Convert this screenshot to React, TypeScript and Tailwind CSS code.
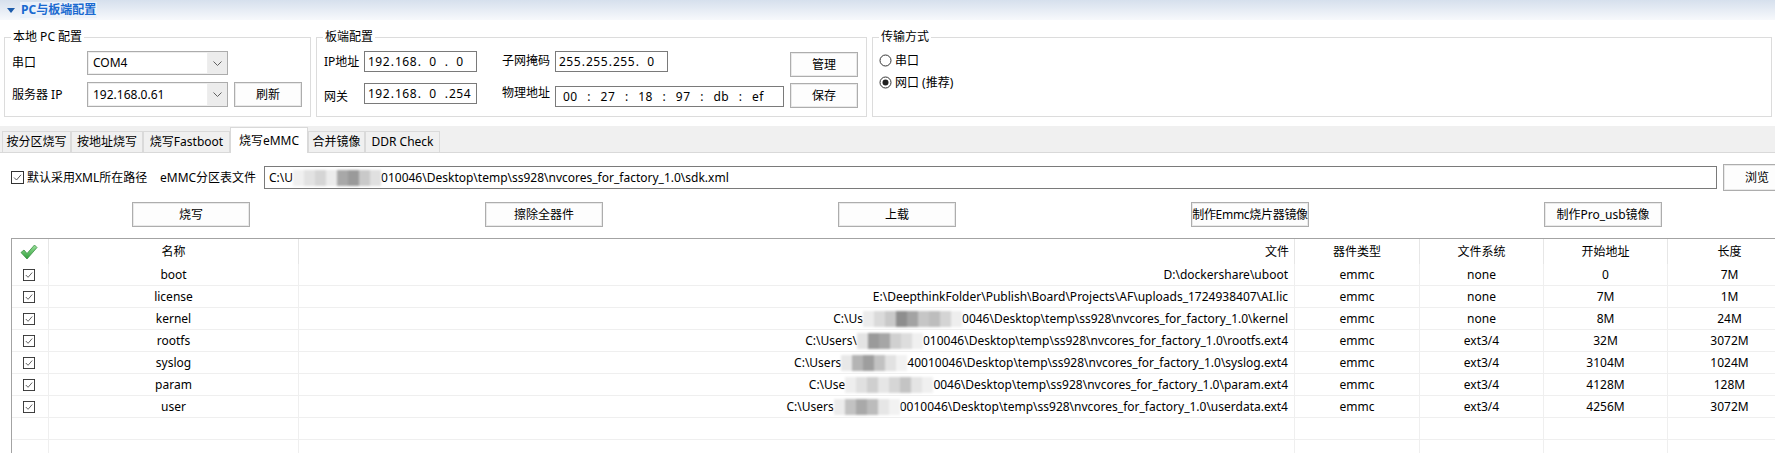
import React from "react";

const FONT = "font-['Noto_Sans','Noto_Sans_CJK_SC',sans-serif]";

function GroupBox({ title, className, children }: { title: string; className: string; children?: React.ReactNode }) {
  return (
    <div className={`relative h-[80px] border border-[#dcdcdc] ${className}`}>
      <span className="absolute left-[6px] top-[-9px] bg-white px-[2px] leading-[16px]">{title}</span>
      {children}
    </div>
  );
}

function Chevron() {
  return (
    <svg width="9" height="5" viewBox="0 0 9 5">
      <path d="M0.5 0.5 L4.5 4.5 L8.5 0.5" fill="none" stroke="#606060" strokeWidth="1" />
    </svg>
  );
}

function Combo({ value, tall }: { value: string; tall?: boolean }) {
  return (
    <div className={`flex w-[141px] shrink-0 border border-[#acacac] bg-white ${tall ? "h-[25px]" : "h-[24px]"}`}>
      <div className="flex flex-1 items-center border border-[#eeeeee] pl-[4px]">{value}</div>
      <div className="flex w-[19px] items-center justify-center bg-[#ececec]">
        <Chevron />
      </div>
    </div>
  );
}

function Btn({ children, className }: { children: React.ReactNode; className: string }) {
  return (
    <div
      className={`flex shrink-0 items-center justify-center whitespace-nowrap border border-[#adadad] bg-[#fdfdfd] shadow-[inset_0_0_0_1px_#e9e9e9] ${className}`}
    >
      {children}
    </div>
  );
}

function IpBox({ parts }: { parts: string[] }) {
  return (
    <div className="flex h-[21px] w-[113px] shrink-0 items-center border border-[#7a7a7a] bg-white pl-[3px] tracking-[0.5px]">
      {parts.map((p, i) => (
        <React.Fragment key={i}>
          {i > 0 && <span className="w-[5px] text-center">.</span>}
          <span className="w-[22px] text-center">{p}</span>
        </React.Fragment>
      ))}
    </div>
  );
}

function Radio({ selected }: { selected?: boolean }) {
  return (
    <svg width="13" height="13" viewBox="0 0 13 13">
      <circle cx="6.5" cy="6.5" r="5.5" fill="white" stroke="#333" strokeWidth="1" />
      {selected && <circle cx="6.5" cy="6.5" r="3" fill="#222" />}
    </svg>
  );
}

function CheckBox({ size }: { size: number }) {
  const s = size;
  return (
    <svg width={s} height={s} viewBox="0 0 13 13" className="shrink-0">
      <rect x="0.5" y="0.5" width="12" height="12" fill="white" stroke="#333" strokeWidth="1" />
      <path d="M3 6.5 L5.5 9 L10 3.8" fill="none" stroke="#555" strokeWidth="1" />
    </svg>
  );
}

function GreenCheck() {
  return (
    <svg width="18" height="16" viewBox="0 0 18 16">
      <defs>
        <linearGradient id="gc" x1="0" y1="0" x2="0" y2="1">
          <stop offset="0" stopColor="#9be29b" />
          <stop offset="1" stopColor="#2f9e3a" />
        </linearGradient>
      </defs>
      <path d="M1 8.5 L4 6 L7 9.5 L14.5 1 L17 3.5 L7 15 Z" fill="url(#gc)" stroke="#3b8f44" strokeWidth="0.8" strokeLinejoin="round" />
    </svg>
  );
}

function Mosaic({ shades }: { shades: string[] }) {
  return (
    <span className="inline-flex h-[16px] align-middle blur-[1px]">
      {shades.map((c, i) => (
        <span key={i} className="h-[16px] w-[11px]" style={{ backgroundColor: c }} />
      ))}
    </span>
  );
}

type Path = { pre: string; shades: string[]; post: string } | string;

function PathText({ p }: { p: Path }) {
  if (typeof p === "string") return <span>{p}</span>;
  return (
    <span className="inline-flex items-center whitespace-pre">
      <span>{p.pre}</span>
      <Mosaic shades={p.shades} />
      <span>{p.post}</span>
    </span>
  );
}

const rows: { name: string; file: Path; fs: string; start: string; len: string }[] = [
  { name: "boot", file: "D:\\dockershare\\uboot", fs: "none", start: "0", len: "7M" },
  {
    name: "license",
    file: "E:\\DeepthinkFolder\\Publish\\Board\\Projects\\AF\\uploads_1724938407\\AI.lic",
    fs: "none",
    start: "7M",
    len: "1M",
  },
  {
    name: "kernel",
    file: {
      pre: "C:\\Us",
      shades: ["#ececec", "#dadada", "#c9c9c9", "#8e8e8e", "#a3a3a3", "#c6c6c6", "#bdbdbd", "#d4d4d4", "#eeeeee"],
      post: "0046\\Desktop\\temp\\ss928\\nvcores_for_factory_1.0\\kernel",
    },
    fs: "none",
    start: "8M",
    len: "24M",
  },
  {
    name: "rootfs",
    file: {
      pre: "C:\\Users\\",
      shades: ["#e4e4e4", "#9a9a9a", "#a6a6a6", "#d0d0d0", "#dddddd", "#f0f0f0"],
      post: "010046\\Desktop\\temp\\ss928\\nvcores_for_factory_1.0\\rootfs.ext4",
    },
    fs: "ext3/4",
    start: "32M",
    len: "3072M",
  },
  {
    name: "syslog",
    file: {
      pre: "C:\\Users",
      shades: ["#e8e8e8", "#b4b4b4", "#9e9e9e", "#c2c2c2", "#e2e2e2", "#f2f2f2"],
      post: "40010046\\Desktop\\temp\\ss928\\nvcores_for_factory_1.0\\syslog.ext4",
    },
    fs: "ext3/4",
    start: "3104M",
    len: "1024M",
  },
  {
    name: "param",
    file: {
      pre: "C:\\Use",
      shades: ["#eeeeee", "#e0e0e0", "#cfcfcf", "#e6e6e6", "#d6d6d6", "#c4c4c4", "#e4e4e4", "#f0f0f0"],
      post: "0046\\Desktop\\temp\\ss928\\nvcores_for_factory_1.0\\param.ext4",
    },
    fs: "ext3/4",
    start: "4128M",
    len: "128M",
  },
  {
    name: "user",
    file: {
      pre: "C:\\Users",
      shades: ["#ececec", "#c2c2c2", "#a9a9a9", "#bcbcbc", "#e6e6e6", "#f2f2f2"],
      post: "0010046\\Desktop\\temp\\ss928\\nvcores_for_factory_1.0\\userdata.ext4",
    },
    fs: "ext3/4",
    start: "4256M",
    len: "3072M",
  },
];

const tabs = ["按分区烧写", "按地址烧写", "烧写Fastboot", "烧写eMMC", "合并镜像", "DDR Check"];
const tabW = ["w-[69px]", "w-[72px]", "w-[87px]", "w-[78px]", "w-[57px]", "w-[75px]"];

export default function App() {
  const hdr = "flex h-[25px] items-center border-r border-[#e6e6e6]";
  const cell = "flex h-[22px] items-center border-r border-b border-[#efefef]";
  return (
    <div className={`h-[453px] w-[1775px] overflow-hidden bg-white text-[12px] leading-[16px] text-black ${FONT}`}>
      {/* Header bar */}
      <div className="flex h-[20px] items-center bg-linear-to-b from-[#d6e0ed] to-[#f7f9fc]">
        <svg className="ml-[7px]" width="8" height="5" viewBox="0 0 8 5">
          <polygon points="0,0 8,0 4,5" fill="#1d5cab" />
        </svg>
        <span className="ml-[5px] bg-[#eaf1fa] px-[1px] font-bold text-[#1a6ad0]">PC与板端配置</span>
      </div>

      {/* Config groups */}
      <div className="flex h-[106px] gap-[5px] pl-[4px] pt-[17px]">
        <GroupBox title="本地 PC 配置" className="w-[307px]">
          <div className="pl-[7px] pt-[13px]">
            <div className="flex h-[24px] items-center">
              <span className="w-[75px] shrink-0">串口</span>
              <Combo value="COM4" />
            </div>
            <div className="mt-[7px] flex h-[25px] items-center">
              <span className="w-[75px] shrink-0">服务器 IP</span>
              <Combo value="192.168.0.61" tall />
              <Btn className="ml-[6px] h-[25px] w-[68px]">刷新</Btn>
            </div>
          </div>
        </GroupBox>

        <GroupBox title="板端配置" className="w-[551px]">
          <div className="flex pl-[7px]">
            <div className="w-[153px] shrink-0 pt-[13px]">
              <div className="flex h-[21px] items-center">
                <span className="w-[40px] shrink-0">IP地址</span>
                <IpBox parts={["192", "168", "0", "0"]} />
              </div>
              <div className="mt-[11px] flex h-[21px] items-center">
                <span className="w-[40px] shrink-0 pt-[6px]">网关</span>
                <IpBox parts={["192", "168", "0", "254"]} />
              </div>
            </div>
            <div className="ml-[25px] w-[282px] shrink-0 pt-[13px]">
              <div className="flex h-[21px] items-center">
                <span className="w-[53px] shrink-0 pb-[2px]">子网掩码</span>
                <IpBox parts={["255", "255", "255", "0"]} />
              </div>
              <div className="mt-[14px] flex h-[21px] items-center">
                <span className="w-[53px] shrink-0 pb-[8px]">物理地址</span>
                <div className="flex h-[21px] w-[229px] shrink-0 items-center justify-between border border-[#7a7a7a] bg-white pl-[7px] pr-[19px] tracking-[0.5px]">
                  <span>00</span>
                  <span>:</span>
                  <span>27</span>
                  <span>:</span>
                  <span>18</span>
                  <span>:</span>
                  <span>97</span>
                  <span>:</span>
                  <span>db</span>
                  <span>:</span>
                  <span>ef</span>
                </div>
              </div>
            </div>
            <div className="ml-[6px] pt-[14px]">
              <Btn className="h-[25px] w-[68px]">管理</Btn>
              <Btn className="mt-[6px] h-[25px] w-[68px]">保存</Btn>
            </div>
          </div>
        </GroupBox>

        <GroupBox title="传输方式" className="w-[900px]">
          <div className="pl-[6px] pt-[16px]">
            <div className="flex h-[13px] items-center gap-[3px]">
              <Radio />
              <span>串口</span>
            </div>
            <div className="mt-[9px] flex h-[13px] items-center gap-[3px]">
              <Radio selected />
              <span>网口 (推荐)</span>
            </div>
          </div>
        </GroupBox>
      </div>

      {/* Tab strip */}
      <div className="flex h-[27px] items-end border-b border-[#d9d9d9] bg-[#f0f0f0] pl-[2px]">
        {tabs.map((t, i) =>
          i === 3 ? (
            <div
              key={t}
              className={`relative z-10 -mb-[1px] flex h-[26px] shrink-0 items-center justify-center border border-b-0 border-[#d9d9d9] bg-white ${tabW[i]}`}
            >
              {t}
            </div>
          ) : (
            <div
              key={t}
              className={`flex h-[21px] shrink-0 items-center justify-center border border-b-0 border-[#dadada] bg-[#f0f0f0] ${tabW[i]}`}
            >
              {t}
            </div>
          )
        )}
      </div>

      {/* XML path row */}
      <div className="mt-[11px] flex h-[27px] items-center pl-[11px]">
        <CheckBox size={13} />
        <span className="ml-[3px] w-[133px] shrink-0 whitespace-nowrap">默认采用XML所在路径</span>
        <span className="w-[104px] shrink-0 whitespace-nowrap">eMMC分区表文件</span>
        <div className="flex h-[23px] w-[1453px] shrink-0 items-center border border-[#7a7a7a] bg-white pl-[4px]">
          <PathText
            p={{
              pre: "C:\\U",
              shades: ["#f0f0f0", "#e2e2e2", "#d5d5d5", "#ececec", "#a8a8a8", "#9a9a9a", "#c9c9c9", "#e0e0e0"],
              post: "010046\\Desktop\\temp\\ss928\\nvcores_for_factory_1.0\\sdk.xml",
            }}
          />
        </div>
        <Btn className="ml-[6px] h-[27px] w-[68px]">浏览</Btn>
      </div>

      {/* Action buttons */}
      <div className="mt-[11px] flex h-[25px] justify-between pl-[132px] pr-[113px]">
        <Btn className="h-[25px] w-[118px]">烧写</Btn>
        <Btn className="h-[25px] w-[118px]">擦除全器件</Btn>
        <Btn className="h-[25px] w-[118px]">上载</Btn>
        <Btn className="h-[25px] w-[118px] tracking-[-0.3px]">制作Emmc烧片器镜像</Btn>
        <Btn className="h-[25px] w-[118px]">制作Pro_usb镜像</Btn>
      </div>

      {/* Table */}
      <div className="ml-[11px] mt-[11px] w-max border-l border-t border-[#a3a3a3]">
        <div className="grid grid-cols-[37px_250px_996px_125px_124px_124px_124px]">
          <div className={`${hdr} justify-center pr-[2px]`}>
            <GreenCheck />
          </div>
          <div className={`${hdr} justify-center`}>名称</div>
          <div className={`${hdr} justify-end pr-[5px]`}>文件</div>
          <div className={`${hdr} justify-center`}>器件类型</div>
          <div className={`${hdr} justify-center`}>文件系统</div>
          <div className={`${hdr} justify-center`}>开始地址</div>
          <div className={`${hdr} justify-center`}>长度</div>

          {rows.map((r) => (
            <React.Fragment key={r.name}>
              <div className={`${cell} justify-center pr-[2px]`}>
                <CheckBox size={12} />
              </div>
              <div className={`${cell} justify-center`}>{r.name}</div>
              <div className={`${cell} justify-end whitespace-pre pr-[6px]`}>
                <PathText p={r.file} />
              </div>
              <div className={`${cell} justify-center`}>emmc</div>
              <div className={`${cell} justify-center`}>{r.fs}</div>
              <div className={`${cell} justify-center`}>{r.start}</div>
              <div className={`${cell} justify-center`}>{r.len}</div>
            </React.Fragment>
          ))}
          {[0, 1].map((k) => (
            <React.Fragment key={k}>
              <div className={cell} />
              <div className={cell} />
              <div className={cell} />
              <div className={cell} />
              <div className={cell} />
              <div className={cell} />
              <div className={cell} />
            </React.Fragment>
          ))}
        </div>
      </div>
    </div>
  );
}
